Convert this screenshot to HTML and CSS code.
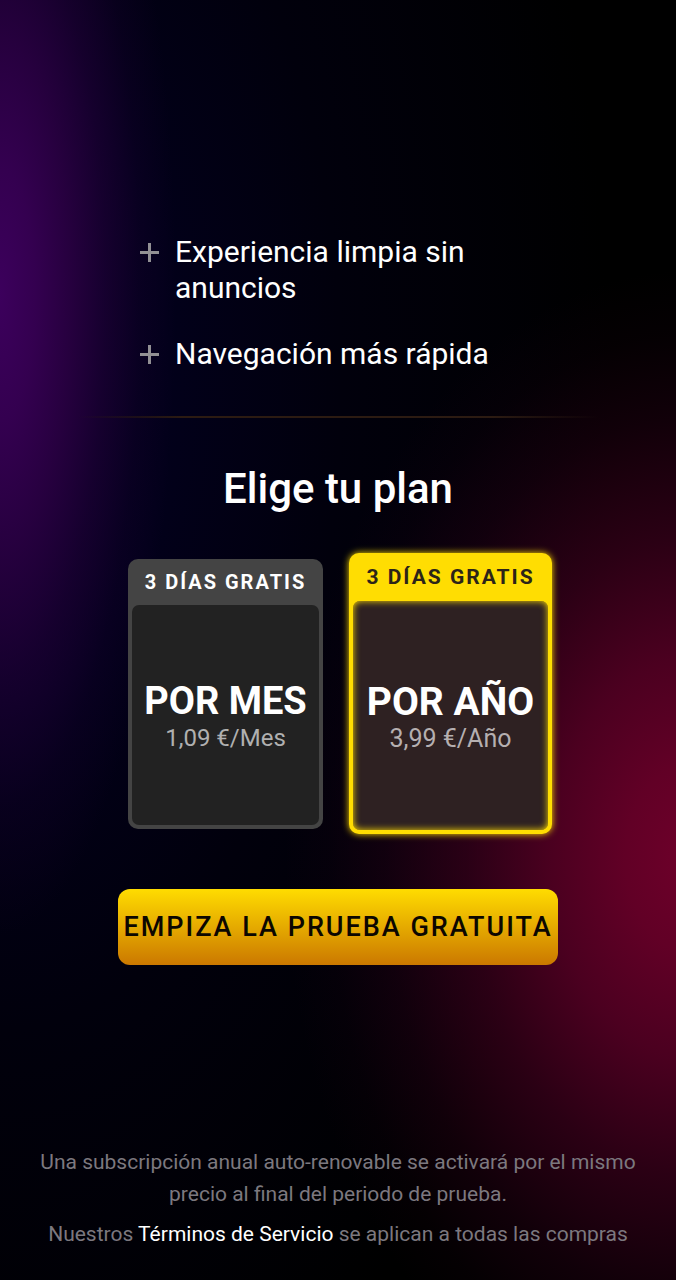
FILE: index.html
```html
<!DOCTYPE html>
<html lang="es">
<head>
<meta charset="utf-8">
<meta name="viewport" content="width=device-width, initial-scale=1">
<title>Elige tu plan</title>
<link rel="stylesheet" href="styles.css">
</head>
<body>
<main class="page">
  <ul class="features">
    <li class="feature">
      <svg class="plus" viewBox="0 0 19 19" aria-hidden="true"><path d="M9.500 0V19M0 9.500H19"/></svg>
      <span>Experiencia limpia sin anuncios</span>
    </li>
    <li class="feature">
      <svg class="plus" viewBox="0 0 19 19" aria-hidden="true"><path d="M9.500 0V19M0 9.500H19"/></svg>
      <span>Navegación más rápida</span>
    </li>
  </ul>
  <hr class="divider">
  <form class="offer">
    <h1 class="title" id="plan-title">Elige tu plan</h1>
    <div class="plans" role="radiogroup" aria-labelledby="plan-title">
      <label class="plan" for="plan-month">
        <input class="plan-input" type="radio" name="plan" id="plan-month" value="month">
        <span class="plan-tag">3 DÍAS GRATIS</span>
        <span class="plan-body">
          <strong class="plan-name">POR MES</strong>
          <span class="plan-price">1,09 €/Mes</span>
        </span>
      </label>
      <label class="plan plan-selected" for="plan-year">
        <input class="plan-input" type="radio" name="plan" id="plan-year" value="year" checked>
        <span class="plan-tag">3 DÍAS GRATIS</span>
        <span class="plan-body">
          <strong class="plan-name">POR AÑO</strong>
          <span class="plan-price">3,99 €/Año</span>
        </span>
      </label>
    </div>
    <button class="cta" type="button">EMPIZA LA PRUEBA GRATUITA</button>
  </form>
  <footer class="legal">
    <p>Una subscripción anual auto-renovable se activará por el mismo precio al final del periodo de prueba.</p>
    <p>Nuestros <a class="terms" href="#">Términos de Servicio</a> se aplican a todas las compras</p>
  </footer>
</main>
</body>
</html>
```
FILE: styles.css
```css
* {
  box-sizing: border-box;
}

body {
  margin: 0;
  background: #000;
  color: #fff;
  font-family: Roboto, "Liberation Sans", sans-serif;
}

.page {
  display: flex;
  flex-direction: column;
  min-height: 100vh;
  padding: 234px 32px 30px;
  background:
    radial-gradient(ellipse 60% 46% at 102% 67%,
      rgba(110, 0, 42, 1) 0%,
      rgba(108, 0, 42, 0.9) 16%,
      rgba(104, 0, 44, 0.72) 34%,
      rgba(98, 0, 46, 0.44) 54%,
      rgba(92, 0, 48, 0.18) 75%,
      rgba(88, 0, 48, 0.05) 89%,
      transparent 100%),
    radial-gradient(ellipse 26% 50% at 0% 23%,
      rgba(60, 0, 92, 1) 0%,
      rgba(56, 0, 84, 0.92) 20%,
      rgba(52, 0, 76, 0.72) 40%,
      rgba(46, 0, 70, 0.44) 60%,
      rgba(38, 0, 62, 0.18) 80%,
      transparent 100%),
    radial-gradient(ellipse 90% 90% at 0% 30%, #04001f 0%, #02001a 28%, #01000c 56%, transparent 100%),
    #000;
}

.features {
  display: flex;
  flex-direction: column;
  gap: 30px;
  width: 100%;
  max-width: 396px;
  margin: 0 auto;
  padding: 0;
  list-style: none;
}

.feature {
  display: flex;
  gap: 16px;
  max-width: 360px;
  font-size: 30px;
  line-height: 36px;
}

.plus {
  flex: none;
  width: 19px;
  height: 19px;
  margin-top: 9px;
  fill: none;
  stroke: #929094;
  stroke-width: 3;
}

.divider {
  width: 100%;
  max-width: 520px;
  height: 2px;
  margin: 44px auto 0;
  border: 0;
  background: linear-gradient(90deg, transparent, #2c1b12 20%, #2c1b12 80%, transparent);
}

.offer {
  display: flex;
  flex-direction: column;
  align-items: center;
}

.title {
  margin: 47px 0 40px;
  font-size: 42px;
  font-weight: 500;
  line-height: 48px;
}

.plans {
  display: flex;
  align-items: center;
  justify-content: center;
  gap: 26px;
  padding-left: 4px;
}

.plan {
  display: flex;
  flex-direction: column;
  width: 195px;
  min-height: 270px;
  padding: 0 4px 4px;
  border-radius: 10px;
  background: #444;
  cursor: pointer;
}

.plan-input {
  position: absolute;
  opacity: 0;
}

.plan-tag {
  color: #fff;
  font-size: 20px;
  font-weight: 700;
  line-height: 46px;
  letter-spacing: 2px;
  text-align: center;
  white-space: nowrap;
}

.plan-body {
  display: flex;
  flex: 1;
  flex-direction: column;
  align-items: center;
  justify-content: center;
  padding-top: 2px;
  border-radius: 7px;
  background: #222;
}

.plan-name {
  font-size: 38px;
  font-weight: 700;
  line-height: 44px;
  white-space: nowrap;
}

.plan-price {
  color: #b0b0b0;
  font-size: 24px;
  line-height: 30px;
}

.plan-selected {
  width: 203px;
  min-height: 281px;
  background: #ffdd02;
  box-shadow: 0 0 7px #ffdd02;
}

.plan-selected .plan-tag {
  color: #2c2418;
  font-size: 21px;
  line-height: 48px;
}

.plan-selected .plan-body {
  background: #2e2122;
  box-shadow: inset 0 0 7px #ffdd02;
}

.plan-selected .plan-name {
  font-size: 39px;
}

.plan-selected .plan-price {
  color: #b5afb0;
  font-size: 25px;
}

.cta {
  width: 100%;
  max-width: 440px;
  margin-top: 55px;
  padding: 20px 0;
  border: 0;
  border-radius: 12px;
  background: linear-gradient(#ffdc00, #cb7800);
  color: #0c0700;
  font-family: inherit;
  font-size: 27px;
  font-weight: 500;
  line-height: 36px;
  letter-spacing: 2px;
  white-space: nowrap;
  cursor: pointer;
}

.legal {
  margin-top: auto;
  color: #7c787f;
  font-size: 21px;
  line-height: 32px;
  text-align: center;
}

.legal p {
  margin: 0 0 8px;
}

.legal p:last-child {
  margin-bottom: 0;
}

.terms {
  color: #fff;
  text-decoration: none;
}
```
